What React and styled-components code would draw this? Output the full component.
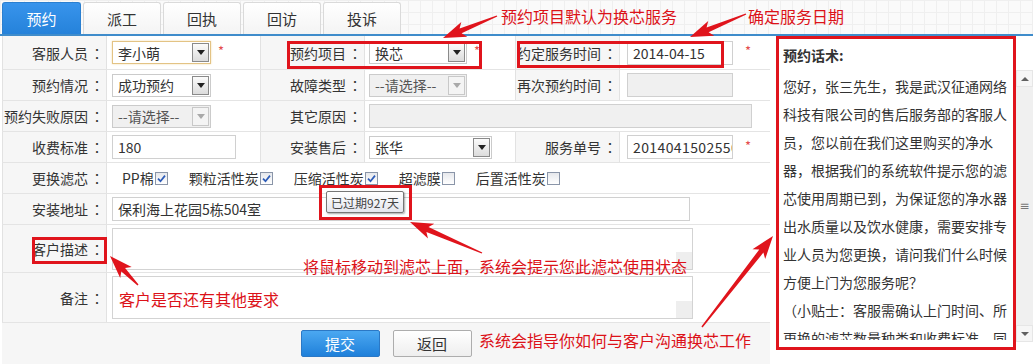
import React from 'react';
import styled, { createGlobalStyle } from 'styled-components';

const RED = '#e0141c';

const GlobalStyle = createGlobalStyle`
  html, body {
    margin: 0;
    padding: 0;
    background: #fff;
  }
  body {
    font-family: "Noto Sans CJK SC", "Microsoft YaHei", sans-serif;
    font-size: 14px;
    color: #333;
  }
`;

const tabs = ['预约', '派工', '回执', '回访', '投诉'];

const filters = [
  { name: 'PP棉', on: true },
  { name: '颗粒活性炭', on: true },
  { name: '压缩活性炭', on: true },
  { name: '超滤膜', on: false },
  { name: '后置活性炭', on: false },
];

const scriptText = [
  '您好，张三先生，我是武汉征通网络科技有限公司的售后服务部的客服人员，您以前在我们这里购买的净水器，根据我们的系统软件提示您的滤芯使用周期已到，为保证您的净水器出水质量以及饮水健康，需要安排专业人员为您更换，请问我们什么时候方便上门为您服务呢？',
  '（小贴士：客服需确认上门时间、所更换的滤芯数量种类和收费标准，同时告知客户上门人员姓名。）',
];

// red annotation arrows: tail -> tip
const arrows = [
  [497, 16, 443, 38],
  [746, 14, 690, 37],
  [482, 253, 410, 222],
  [138, 285, 110, 256],
  [702, 327, 773, 236],
];

// red annotation frames: left, top, right, bottom
const boxes = [
  [287, 41, 482, 69],
  [517, 41, 724, 68],
  [319, 185, 412, 220],
  [32, 237, 107, 264],
];

function arrowPoints([x1, y1, x2, y2]) {
  const dx = x2 - x1;
  const dy = y2 - y1;
  const len = Math.hypot(dx, dy);
  const ux = dx / len;
  const uy = dy / len;
  const nx = -uy;
  const ny = ux;
  const head = 19;
  const bx = x2 - ux * head;
  const by = y2 - uy * head;
  const cx = x2 - ux * (head + 4);
  const cy = y2 - uy * (head + 4);
  const pts = [
    [x1 + nx * 0.7, y1 + ny * 0.7],
    [bx + nx * 2.6, by + ny * 2.6],
    [cx + nx * 8, cy + ny * 8],
    [x2, y2],
    [cx - nx * 8, cy - ny * 8],
    [bx - nx * 2.6, by - ny * 2.6],
    [x1 - nx * 0.7, y1 - ny * 0.7],
  ];
  return pts.map((p) => p.map((v) => v.toFixed(1)).join(',')).join(' ');
}

function FieldLabel({ children }) {
  return (
    <Label>
      {children}
      <Colon>：</Colon>
    </Label>
  );
}

function Select({ w, value, focus, disabled }) {
  return (
    <SelectBox w={w} focus={focus} disabled={disabled}>
      <SelectText>{value}</SelectText>
      <DropBtn disabled={disabled} />
    </SelectBox>
  );
}

export default function App() {
  return (
    <Page>
      <GlobalStyle />
      <TabBar>
        {tabs.map((t, i) => (
          <Tab key={t} active={i === 0} w={i === 0 ? 79 : 78}>{t}</Tab>
        ))}
      </TabBar>
      <Body>
        <FormArea>
          <Row h={34}>
            <FieldLabel>客服人员</FieldLabel>
            <Field w={153} pad={5}>
              <Select w={99} focus value="李小萌" />
              <Star>*</Star>
            </Field>
            <FieldLabel>预约项目</FieldLabel>
            <Field w={150} pad={4}>
              <Select w={98} value="换芯" />
              <Star>*</Star>
            </Field>
            <FieldLabel>约定服务时间</FieldLabel>
            <Field pad={7}>
              <Input w={106}>2014-04-15</Input>
              <Star gap={12}>*</Star>
            </Field>
          </Row>
          <Row h={31}>
            <FieldLabel>预约情况</FieldLabel>
            <Field w={153} pad={5}>
              <Select w={99} value="成功预约" />
            </Field>
            <FieldLabel>故障类型</FieldLabel>
            <Field w={150} pad={4}>
              <Select w={98} disabled value="--请选择--" />
            </Field>
            <FieldLabel>再次预约时间</FieldLabel>
            <Field pad={7}>
              <Input w={106} disabled />
            </Field>
          </Row>
          <Row h={31}>
            <FieldLabel>预约失败原因</FieldLabel>
            <Field w={153} pad={5}>
              <Select w={99} disabled value="--请选择--" />
            </Field>
            <FieldLabel>其它原因</FieldLabel>
            <Field pad={4}>
              <Input w={383} disabled />
            </Field>
          </Row>
          <Row h={31}>
            <FieldLabel>收费标准</FieldLabel>
            <Field w={153} pad={5}>
              <Input w={124}>180</Input>
            </Field>
            <FieldLabel>安装售后</FieldLabel>
            <Field w={150} pad={4}>
              <Select w={123} value="张华" />
            </Field>
            <FieldLabel>服务单号</FieldLabel>
            <Field pad={7}>
              <Input w={106} wide>20140415025501</Input>
              <Star gap={12}>*</Star>
            </Field>
          </Row>
          <Row h={31}>
            <FieldLabel>更换滤芯</FieldLabel>
            <Field pad={15}>
              <FilterList>
                {filters.map((f) => (
                  <FilterItem key={f.name}>
                    {f.name}
                    <CheckBox>
                      {f.on && (
                        <svg width="9" height="9" viewBox="0 0 9 9">
                          <path d="M1 4.6 L3.5 7.2 L8 1.6" fill="none" stroke="#2d5cb8" strokeWidth="1.7" />
                        </svg>
                      )}
                    </CheckBox>
                  </FilterItem>
                ))}
              </FilterList>
            </Field>
          </Row>
          <Row h={31}>
            <FieldLabel>安装地址</FieldLabel>
            <Field pad={5}>
              <Input w={578}>保利海上花园5栋504室</Input>
            </Field>
          </Row>
          <Row h={48}>
            <FieldLabel>客户描述</FieldLabel>
            <Field pad={5}>
              <TextArea h={42}><Corner /></TextArea>
            </Field>
          </Row>
          <Row h={50}>
            <FieldLabel>备注</FieldLabel>
            <Field pad={5}>
              <TextArea h={43}><Corner /></TextArea>
            </Field>
          </Row>
          <ButtonRow>
            <Button primary>提交</Button>
            <Button>返回</Button>
          </ButtonRow>
        </FormArea>
        <Side>
          <ScriptBox>
            <ScriptTitle>预约话术:</ScriptTitle>
            <ScriptBody>
              {scriptText.map((p) => (
                <p key={p.slice(0, 4)}>{p}</p>
              ))}
            </ScriptBody>
          </ScriptBox>
          <ScrollBar>
            <ScrollBtn up />
            <ScrollThumb>≡</ScrollThumb>
            <ScrollBtn />
          </ScrollBar>
        </Side>
      </Body>

      <Tooltip>已过期927天</Tooltip>

      <Overlay width="1033" height="364" viewBox="0 0 1033 364">
        {boxes.map(([x1, y1, x2, y2]) => (
          <rect
            key={`${x1}-${y1}`}
            x={x1 + 1.5}
            y={y1 + 1.5}
            width={x2 - x1 - 3}
            height={y2 - y1 - 3}
            fill="none"
            stroke={RED}
            strokeWidth="3"
          />
        ))}
        {arrows.map((a) => (
          <polygon key={a.join('-')} points={arrowPoints(a)} fill={RED} />
        ))}
      </Overlay>
      <Note x={501} y={6}>预约项目默认为换芯服务</Note>
      <Note x={748} y={6}>确定服务日期</Note>
      <Note x={303} y={256}>将鼠标移动到滤芯上面，系统会提示您此滤芯使用状态</Note>
      <Note x={119} y={289}>客户是否还有其他要求</Note>
      <Note x={479} y={330}>系统会指导你如何与客户沟通换芯工作</Note>
    </Page>
  );
}

const Page = styled.div`
  position: relative;
  width: 1033px;
  height: 364px;
  overflow: hidden;
  display: flex;
  flex-direction: column;
`;

const TabBar = styled.div`
  height: 36px;
  box-sizing: border-box;
  padding: 2px 0 0 2px;
  display: flex;
  align-items: flex-end;
  gap: 2px;
  border-bottom: 2px solid #3f8ccb;
  background-color: #fafafa;
  background-image:
    linear-gradient(#efefef 1px, transparent 1px),
    linear-gradient(90deg, #efefef 1px, transparent 1px);
  background-size: 12px 12px;
`;

const Tab = styled.div`
  width: ${(p) => p.w}px;
  height: 32px;
  box-sizing: border-box;
  display: flex;
  align-items: center;
  justify-content: center;
  font-size: 15px;
  border: 1px solid ${(p) => (p.active ? '#2a7fd0' : '#dadada')};
  border-bottom: none;
  border-radius: 3px 3px 0 0;
  background: ${(p) => (p.active ? 'linear-gradient(#3894ec, #2582da)' : 'linear-gradient(#ffffff, #f4f4f4)')};
  color: ${(p) => (p.active ? '#fff' : '#333')};
`;

const Body = styled.div`
  flex: 1;
  display: flex;
  min-height: 0;
`;

const FormArea = styled.div`
  width: 768px;
  margin-left: 2px;
  display: flex;
  flex-direction: column;
`;

const Row = styled.div`
  height: ${(p) => p.h}px;
  box-sizing: border-box;
  display: flex;
  border-bottom: 1px solid #e4e4e4;
`;

const Label = styled.div`
  width: 105px;
  flex: none;
  box-sizing: border-box;
  display: flex;
  align-items: center;
  justify-content: flex-end;
  padding-right: 2px;
  background: #f6f6f6;
  border-left: 1px solid #e2e2e2;
  border-right: 1px solid #e2e2e2;
  white-space: nowrap;
  color: #333;
`;

const Colon = styled.span`
  width: 14px;
  text-align: center;
  font-family: "Noto Sans CJK TC", "Noto Sans CJK SC", sans-serif;
  margin-left: 2px;
`;

const Field = styled.div`
  ${(p) => (p.w ? `width: ${p.w}px; flex: none;` : 'flex: 1;')}
  box-sizing: border-box;
  display: flex;
  align-items: center;
  padding-left: ${(p) => p.pad}px;
  background: #fff;
  min-width: 0;
`;

const SelectBox = styled.div`
  width: ${(p) => p.w}px;
  height: 23px;
  box-sizing: border-box;
  display: flex;
  align-items: center;
  padding: 0 1px 0 5px;
  border: 1px solid ${(p) => (p.focus ? '#e3c384' : '#cbcbcb')};
  box-shadow: ${(p) => (p.focus ? '0 0 2px #f2dcae' : 'none')};
  background: ${(p) => (p.disabled ? '#f0f0f0' : '#fff')};
  color: ${(p) => (p.disabled ? '#555' : '#333')};
`;

const SelectText = styled.span`
  flex: 1;
  white-space: nowrap;
  overflow: hidden;
`;

const DropBtn = styled.span`
  width: 17px;
  height: 19px;
  box-sizing: border-box;
  flex: none;
  display: flex;
  align-items: center;
  justify-content: center;
  border: 1px solid ${(p) => (p.disabled ? '#c8c8c8' : '#8a8a8a')};
  background: ${(p) => (p.disabled ? '#f4f4f4' : 'linear-gradient(#fbfbfb, #dcdcdc)')};

  &::after {
    content: '';
    border-left: 4px solid transparent;
    border-right: 4px solid transparent;
    border-top: 5px solid ${(p) => (p.disabled ? '#a9a9a9' : '#222')};
  }
`;

const Input = styled.div`
  width: ${(p) => p.w}px;
  height: 24px;
  box-sizing: border-box;
  flex: none;
  display: flex;
  align-items: center;
  padding-left: 5px;
  border: 1px solid #d0d0d0;
  background: ${(p) => (p.disabled ? '#f0f0f0' : '#fff')};
  white-space: nowrap;
  overflow: hidden;
  letter-spacing: ${(p) => (p.wide ? '0.4px' : 'normal')};
`;

const Star = styled.span`
  margin-left: ${(p) => p.gap || 7}px;
  padding-bottom: 4px;
  color: #e44c4c;
  font-size: 13px;
`;

const FilterList = styled.div`
  display: flex;
  align-items: center;
  gap: 21px;
`;

const FilterItem = styled.span`
  display: flex;
  align-items: center;
  white-space: nowrap;
`;

const CheckBox = styled.span`
  width: 13px;
  height: 13px;
  box-sizing: border-box;
  margin-left: 1px;
  display: inline-flex;
  align-items: center;
  justify-content: center;
  border: 1px solid #8a95a8;
  background: linear-gradient(#e6e8ec, #ffffff);
`;

const TextArea = styled.div`
  width: 581px;
  height: ${(p) => p.h}px;
  box-sizing: border-box;
  display: flex;
  justify-content: flex-end;
  align-items: flex-end;
  border: 1px solid #d3d3d3;
  background: #fff;
`;

const Corner = styled.div`
  width: 16px;
  height: 17px;
  background: #eeeeee;
`;

const ButtonRow = styled.div`
  flex: 1;
  display: flex;
  justify-content: center;
  align-items: flex-start;
  gap: 13px;
  padding-top: 7px;
  background: #f6f6f6;
`;

const Button = styled.div`
  width: 79px;
  height: 27px;
  box-sizing: border-box;
  display: flex;
  align-items: center;
  justify-content: center;
  font-size: 15px;
  border-radius: 2px;
  border: 1px solid ${(p) => (p.primary ? '#2b78c5' : '#adadad')};
  background: ${(p) => (p.primary ? 'linear-gradient(#4ba8f1, #1f80da)' : 'linear-gradient(#ffffff, #eeeeee)')};
  color: ${(p) => (p.primary ? '#fff' : '#333')};
`;

const Side = styled.div`
  flex: 1;
  display: flex;
  padding-left: 6px;
`;

const ScriptBox = styled.div`
  width: 240px;
  height: 314px;
  box-sizing: border-box;
  flex: none;
  border: 3px solid ${RED};
  padding: 2px 0 0 4px;
  background: #fff;
`;

const ScriptTitle = styled.div`
  font-weight: bold;
  line-height: 28px;
  color: #333;
`;

const ScriptBody = styled.div`
  margin-top: 3px;
  width: 230px;
  height: 268px;
  overflow: hidden;
  line-height: 28px;
  color: #333;

  p {
    margin: 0;
  }
`;

const ScrollBar = styled.div`
  width: 17px;
  height: 272px;
  margin-top: 34px;
  box-sizing: border-box;
  display: flex;
  flex-direction: column;
  background: #f0f0f0;
`;

const ScrollBtn = styled.div`
  height: 17px;
  display: flex;
  align-items: center;
  justify-content: center;
  background: #f6f6f6;
  border: 1px solid #e6e6e6;
  box-sizing: border-box;

  &::after {
    content: '';
    border-left: 4px solid transparent;
    border-right: 4px solid transparent;
    ${(p) => (p.up ? 'border-bottom: 4px solid #606060;' : 'border-top: 4px solid #606060;')}
  }
`;

const ScrollThumb = styled.div`
  flex: 1;
  display: flex;
  align-items: center;
  justify-content: center;
  color: #777;
  font-size: 12px;
  font-family: "DejaVu Sans", sans-serif;
`;

const Tooltip = styled.div`
  position: absolute;
  left: 326px;
  top: 191px;
  padding: 0 4px;
  height: 20px;
  display: flex;
  align-items: center;
  font-size: 12px;
  color: #444;
  border: 1px solid #767676;
  border-radius: 2px;
  background: linear-gradient(#ffffff, #e5e6ee);
  box-shadow: 1px 1px 2px rgba(0, 0, 0, 0.35);
`;

const Overlay = styled.svg`
  position: absolute;
  left: 0;
  top: 0;
  pointer-events: none;
`;

const Note = styled.div`
  position: absolute;
  left: ${(p) => p.x}px;
  top: ${(p) => p.y}px;
  font-size: 16px;
  line-height: 20px;
  color: #dc1219;
  white-space: nowrap;
`;
